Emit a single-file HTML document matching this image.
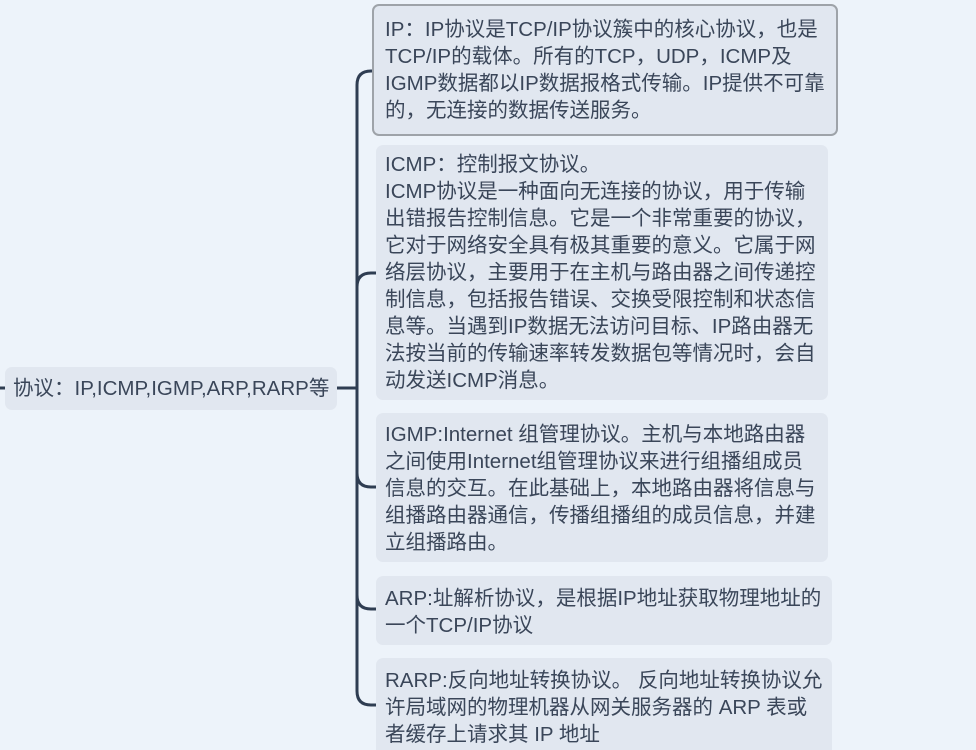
<!DOCTYPE html>
<html><head><meta charset="utf-8"><style>
html,body{margin:0;padding:0;width:976px;height:750px;overflow:hidden;background:#edf3fa;}
body{position:relative;font-family:"Liberation Sans","Noto Sans CJK SC",sans-serif;color:#3a4659;font-size:20.5px;letter-spacing:0px;}
.b{position:absolute;background:#e1e7f0;border-radius:7px;box-sizing:border-box;padding:0 0 0 9px;line-height:27px;white-space:nowrap;}
</style></head><body>
<svg width="976" height="750" style="position:absolute;left:0;top:0">
<g fill="none" stroke="#2f3d52" stroke-width="3">
<path d="M0 388 H5"/>
<path d="M337 388 H357"/>
<path d="M374 71 H371 Q357 71 357 85 V691 Q357 705 371 705 H376"/>
<path d="M376 273 H371 Q357 273 357 287"/>
<path d="M376 487 H371 Q357 487 357 473"/>
<path d="M376 609 H371 Q357 609 357 595"/>
</g></svg>
<div class="b" style="left:5px;top:367px;width:332px;height:43px;padding-left:8px;line-height:43px;">协议：IP,ICMP,IGMP,ARP,RARP等</div>
<div class="b" style="left:372px;top:4px;width:466px;height:132px;border:2px solid #9ea3a9;padding:10px 0 0 11px;">IP：IP协议是TCP/IP协议簇中的核心协议，也是<br>TCP/IP的载体。所有的TCP，UDP，ICMP及<br>IGMP数据都以IP数据报格式传输。IP提供不可靠<br>的，无连接的数据传送服务。</div>
<div class="b" style="left:376px;top:145px;width:452px;height:255px;padding-top:6px;">ICMP：控制报文协议。<br>ICMP协议是一种面向无连接的协议，用于传输<br>出错报告控制信息。它是一个非常重要的协议，<br>它对于网络安全具有极其重要的意义。它属于网<br>络层协议，主要用于在主机与路由器之间传递控<br>制信息，包括报告错误、交换受限控制和状态信<br>息等。当遇到IP数据无法访问目标、IP路由器无<br>法按当前的传输速率转发数据包等情况时，会自<br>动发送ICMP消息。</div>
<div class="b" style="left:376px;top:413px;width:452px;height:149px;padding-top:8px;">IGMP:Internet 组管理协议。主机与本地路由器<br>之间使用Internet组管理协议来进行组播组成员<br>信息的交互。在此基础上，本地路由器将信息与<br>组播路由器通信，传播组播组的成员信息，并建<br>立组播路由。</div>
<div class="b" style="left:376px;top:576px;width:456px;height:69px;padding-top:9px;">ARP:址解析协议，是根据IP地址获取物理地址的<br>一个TCP/IP协议</div>
<div class="b" style="left:376px;top:658px;width:456px;height:100px;padding-top:9px;">RARP:反向地址转换协议。 反向地址转换协议允<br>许局域网的物理机器从网关服务器的 ARP 表或<br>者缓存上请求其 IP 地址</div>
</body></html>
